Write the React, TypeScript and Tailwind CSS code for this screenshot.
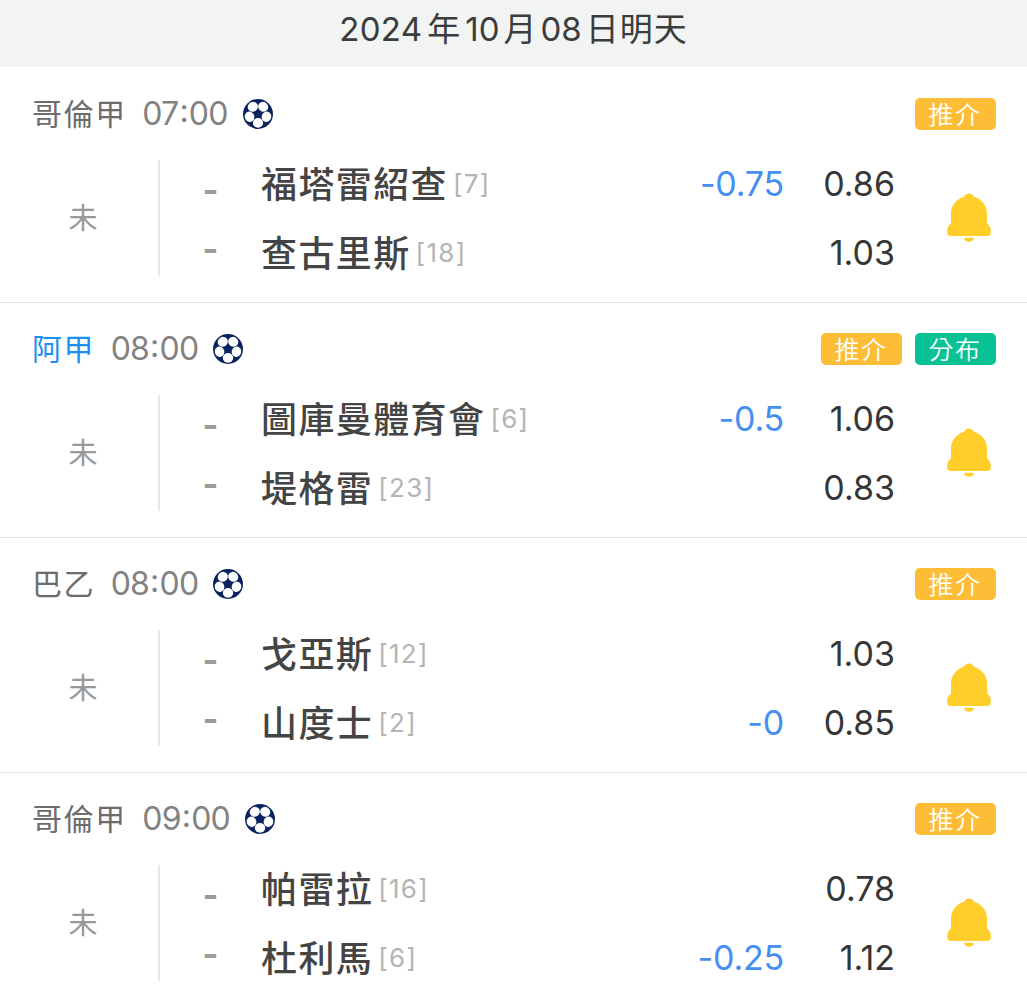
import React from "react";

type Team = { name: string; rank: string; handicap?: string; odds: string };
type Match = {
  league: string;
  highlight?: boolean;
  time: string;
  distribution?: boolean;
  teams: [Team, Team];
};

const matches: Match[] = [
  {
    league: "哥倫甲",
    time: "07:00",
    teams: [
      { name: "福塔雷紹查", rank: "[7]", handicap: "-0.75", odds: "0.86" },
      { name: "查古里斯", rank: "[18]", odds: "1.03" },
    ],
  },
  {
    league: "阿甲",
    highlight: true,
    time: "08:00",
    distribution: true,
    teams: [
      { name: "圖庫曼體育會", rank: "[6]", handicap: "-0.5", odds: "1.06" },
      { name: "堤格雷", rank: "[23]", odds: "0.83" },
    ],
  },
  {
    league: "巴乙",
    time: "08:00",
    teams: [
      { name: "戈亞斯", rank: "[12]", odds: "1.03" },
      { name: "山度士", rank: "[2]", handicap: "-0", odds: "0.85" },
    ],
  },
  {
    league: "哥倫甲",
    time: "09:00",
    teams: [
      { name: "帕雷拉", rank: "[16]", odds: "0.78" },
      { name: "杜利馬", rank: "[6]", handicap: "-0.25", odds: "1.12" },
    ],
  },
];

function SoccerBall() {
  return (
    <svg viewBox="0 0 30 30" className="ml-[15px] h-[30px] w-[30px] shrink-0">
      <circle cx="15" cy="15" r="15" fill="#0b2261" />
      {[0, 72, 144, 216, 288].map((a) => (
        <ellipse key={a} cx="15" cy="23.900" rx="5.200" ry="4.800" fill="#fff" transform={`rotate(${a} 15 15)`} />
      ))}
    </svg>
  );
}

function Bell() {
  return (
    <svg viewBox="0 0 44 49" className="h-[49px] w-[44px]" fill="#ffce2b">
      <path d="M22 0.5C24.4 0.5 26.2 1.8 27.1 3.8C34.600 6.300 40 12.600 40 20.500V30.500C42.500 32.200 43.800 34.600 43.800 37.800V39.500C43.800 41.800 42.500 43 40.300 43H3.700C1.500 43 .2 41.800 .2 39.500V37.800C.2 34.600 1.500 32.200 4 30.500V20.500C4 12.600 9.400 6.300 16.900 3.800C17.800 1.800 19.600 .5 22 .5Z" />
      <path d="M17 44.800H27C26.600 47.300 24.700 48.700 22 48.700C19.300 48.700 17.400 47.300 17 44.800Z" />
    </svg>
  );
}

function Tag({ label, color }: { label: string; color: string }) {
  return (
    <span className={`flex h-8 w-[81px] items-center justify-center rounded-[5px] pt-[2px] text-[25px] leading-none font-[350] tracking-[1.5px] text-white ${color}`}>
      {label}
    </span>
  );
}

function Time({ value }: { value: string }) {
  const [hours, minutes] = value.split(":");
  return (
    <span className="ml-[15.5px] flex text-[32px] leading-none tracking-[-0.8px] text-[#828282]">
      <span>{hours}</span>
      <span className="mx-[1px] -mt-[3px]">:</span>
      <span>{minutes}</span>
    </span>
  );
}

function MatchRow({ match }: { match: Match }) {
  return (
    <section className="h-[235px] shrink-0 border-b border-[#e4e4e4] pt-[25px]">
      <header className="flex h-[42px] items-center pr-[31.5px] pl-8">
        <span className={`text-[30px] leading-none tracking-[1.6px] ${match.highlight ? "text-[#1c90f0]" : "text-[#6c6c6c]"}`}>
          {match.league}
        </span>
        <Time value={match.time} />
        <SoccerBall />
        <div className="ml-auto flex gap-[13px]">
          <Tag label="推介" color="bg-[#febd37]" />
          {match.distribution && <Tag label="分布" color="bg-[#08c195]" />}
        </div>
      </header>
      <div className="flex h-[138px] pt-px">
        <div className="mt-[24px] flex h-[116px] w-[160px] items-center justify-center border-r-2 border-[#e8e8e8] text-[29px] text-[#999]">
          <span className="pt-[2px] pl-[8px]">未</span>
        </div>
        <div className="mt-[24px] flex w-[101px] flex-col items-center text-[34px] font-bold text-[#9c9c9c]">
          <span className="h-[60px] leading-[59px]">-</span>
          <span className="h-[60px] leading-[59px]">-</span>
        </div>
        <div className="mt-[14px] flex w-[633px] flex-col">
          {match.teams.map((team) => (
            <div key={team.name} className="flex h-[69px] shrink-0 items-center whitespace-nowrap">
              <span className="text-[36px] leading-none font-medium tracking-[1.4px] text-[#444]">{team.name}</span>
              <span className="ml-[5px] pb-[2px] text-[26px] leading-none tracking-[1.3px] text-[#b4b4b4]">{team.rank}</span>
              <span className="ml-auto pb-[2px] text-[34px] leading-none tracking-[-0.2px] text-[#468ff0]">{team.handicap}</span>
              <span className="w-[111px] -mr-px pb-[2px] text-right text-[34px] leading-none text-[#363636]">{team.odds}</span>
            </div>
          ))}
        </div>
        <div className="mt-[57px] ml-[53px]">
          <Bell />
        </div>
      </div>
    </section>
  );
}

export default function App() {
  return (
    <main lang="zh-Hant" className="flex h-[1000px] w-[1027px] flex-col overflow-hidden bg-white font-['Inter','Noto_Sans_CJK_TC',sans-serif]">
      <h1 className="flex h-[68px] shrink-0 items-center justify-center border-b border-white bg-[#f2f4f4] bg-clip-padding pb-[8px] text-[33px] leading-none font-normal text-[#3b3d3d]">
        <span className="tracking-[0.3px]">2024</span>
        <span className="ml-[5px]">年</span>
        <span className="ml-[5px]">10</span>
        <span className="ml-[4px]">月</span>
        <span className="ml-[4px]">08</span>
        <span className="ml-[4px] tracking-[1px]">日明天</span>
      </h1>
      {matches.map((match, i) => (
        <MatchRow key={i} match={match} />
      ))}
    </main>
  );
}
